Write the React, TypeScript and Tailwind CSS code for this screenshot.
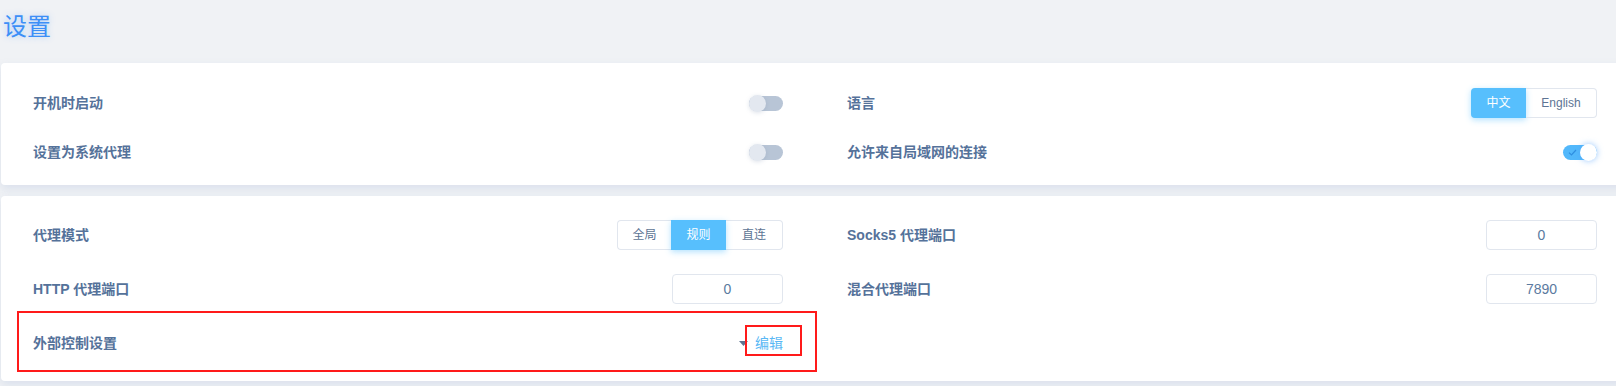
import React from "react";

const font = {
  fontFamily: '"Liberation Sans", "Noto Sans CJK SC", sans-serif',
};

function Toggle({ on }: { on: boolean }) {
  if (on) {
    return (
      <div className="relative w-[34px] h-[17px]">
        <div className="absolute left-0 top-[1px] w-[34px] h-[15px] rounded-full bg-[#52b8fb]" />
        <svg className="absolute left-[5px] top-[4px]" width="9" height="9" viewBox="0 0 9 9">
          <path d="M1 4.6 L3.5 7 L8 2" fill="none" stroke="#2f8fe0" strokeWidth="1.2" />
        </svg>
        <div className="absolute right-0 top-0 w-[17px] h-[17px] rounded-full bg-white shadow-[0_0_6px_rgba(82,160,251,0.6)]" />
      </div>
    );
  }
  return (
    <div className="relative w-[34px] h-[17px]">
      <div className="absolute left-0 top-[1px] w-[34px] h-[15px] rounded-full bg-[#b8c5d6]" />
      <div className="absolute left-0 top-0 w-[17px] h-[17px] rounded-full bg-[#e3e8f0] shadow-[0_1px_4px_rgba(120,140,170,0.25)]" />
    </div>
  );
}

function Label({ children }: { children: React.ReactNode }) {
  return <span className="text-[14px] font-bold text-[#55729a]">{children}</span>;
}

function Row({ label, children }: { label: string; children?: React.ReactNode }) {
  return (
    <div className="flex items-center justify-between h-[30px]">
      <Label>{label}</Label>
      {children}
    </div>
  );
}

function PortInput({ value }: { value: string }) {
  return (
    <div className="w-[111px] h-[30px] flex items-center justify-center border border-[#e1e6ee] rounded-[4px] text-[14px] text-[#5b7aa0]">
      {value}
    </div>
  );
}

function Segmented({ items, active }: { items: { text: string; w: string }[]; active: number }) {
  return (
    <div className="flex h-[30px] text-[12px]">
      {items.map((it, i) => (
        <div
          key={it.text}
          className={
            i === active
              ? `${it.w} flex items-center justify-center bg-[#57bffd] text-white shadow-[0_2px_6px_rgba(87,191,253,0.45)] z-10`
              : `${it.w} flex items-center justify-center border border-[#e1e6ee] text-[#5d7494] ${
                  i === 0 ? "rounded-l-[4px] border-r-0" : "rounded-r-[4px] border-l-0"
                }`
          }
        >
          {it.text}
        </div>
      ))}
    </div>
  );
}

export default function App() {
  return (
    <div className="relative w-[1616px] h-[386px] overflow-hidden bg-[#f0f2f5]" style={font}>
      <div className="h-[63px] pl-[3px] pt-[12px]">
        <h1 className="text-[24px] leading-[30px] text-[#3d8ff7] [text-shadow:0_0_6px_rgba(61,143,247,0.35)]">
          设置
        </h1>
      </div>

      <div className="ml-[1px] w-[1628px] bg-white rounded-[4px] shadow-[0_4px_10px_rgba(120,150,200,0.18)] px-[32px] pt-[25px] pb-[18px] grid grid-cols-[750px_750px] gap-x-[64px] gap-y-[19px]">
        <Row label="开机时启动">
          <Toggle on={false} />
        </Row>
        <Row label="语言">
          <div className="flex h-[30px] text-[12px]">
            <div className="w-[55px] flex items-center justify-center bg-[#57bffd] text-white rounded-l-[4px] shadow-[0_2px_6px_rgba(87,191,253,0.45)]">
              中文
            </div>
            <div className="w-[71px] flex items-center justify-center border border-l-0 border-[#e1e6ee] rounded-r-[4px] text-[#5d7494]">
              English
            </div>
          </div>
        </Row>
        <Row label="设置为系统代理">
          <Toggle on={false} />
        </Row>
        <Row label="允许来自局域网的连接">
          <Toggle on={true} />
        </Row>
      </div>

      <div className="mt-[11px] ml-[1px] w-[1628px] h-[185px] bg-white rounded-[4px] shadow-[0_4px_10px_rgba(120,150,200,0.18)] px-[32px] pt-[24px] grid grid-cols-[750px_750px] gap-x-[64px] gap-y-[24px] content-start">
        <Row label="代理模式">
          <Segmented
            active={1}
            items={[
              { text: "全局", w: "w-[54px]" },
              { text: "规则", w: "w-[55px]" },
              { text: "直连", w: "w-[57px]" },
            ]}
          />
        </Row>
        <Row label="Socks5 代理端口">
          <PortInput value="0" />
        </Row>
        <Row label="HTTP 代理端口">
          <PortInput value="0" />
        </Row>
        <Row label="混合代理端口">
          <PortInput value="7890" />
        </Row>
        <Row label="外部控制设置">
          <div className="flex items-center gap-[7px]">
            <svg width="9" height="5" viewBox="0 0 9 5">
              <path d="M0 0 L9 0 L4.5 5 Z" fill="#5f7390" />
            </svg>
            <span className="text-[14px] text-[#5ab8f5]">编辑</span>
          </div>
        </Row>
      </div>

      <div className="absolute left-[17px] top-[311px] w-[800px] h-[61px] border-2 border-[#ff1a1a]" />
      <div className="absolute left-[745px] top-[325px] w-[57px] h-[31px] border-2 border-[#ff1a1a]" />
    </div>
  );
}
